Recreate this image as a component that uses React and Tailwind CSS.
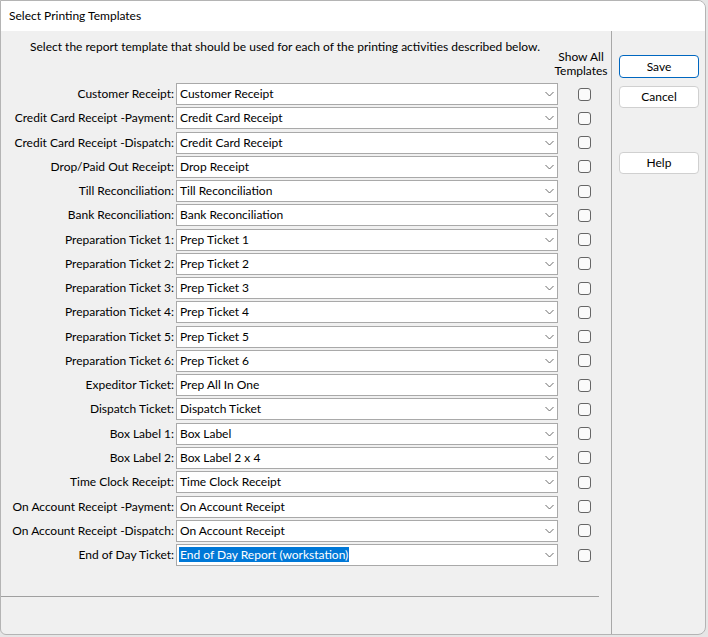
import React from "react";

const rows = [
  ["Customer Receipt:", "Customer Receipt"],
  ["Credit Card Receipt -Payment:", "Credit Card Receipt"],
  ["Credit Card Receipt -Dispatch:", "Credit Card Receipt"],
  ["Drop/Paid Out Receipt:", "Drop Receipt"],
  ["Till Reconciliation:", "Till Reconciliation"],
  ["Bank Reconciliation:", "Bank Reconciliation"],
  ["Preparation Ticket 1:", "Prep Ticket 1"],
  ["Preparation Ticket 2:", "Prep Ticket 2"],
  ["Preparation Ticket 3:", "Prep Ticket 3"],
  ["Preparation Ticket 4:", "Prep Ticket 4"],
  ["Preparation Ticket 5:", "Prep Ticket 5"],
  ["Preparation Ticket 6:", "Prep Ticket 6"],
  ["Expeditor Ticket:", "Prep All In One"],
  ["Dispatch Ticket:", "Dispatch Ticket"],
  ["Box Label 1:", "Box Label"],
  ["Box Label 2:", "Box Label 2 x 4"],
  ["Time Clock Receipt:", "Time Clock Receipt"],
  ["On Account Receipt -Payment:", "On Account Receipt"],
  ["On Account Receipt -Dispatch:", "On Account Receipt"],
  ["End of Day Ticket:", "End of Day Report (workstation)", true],
];

function Chevron() {
  return (
    <svg width="9" height="6" viewBox="0 0 9 6" className="shrink-0">
      <path d="M0.5 1 L4.5 5 L8.5 1" fill="none" stroke="#6b6b6b" strokeWidth="1" />
    </svg>
  );
}

function Row({ label, value, selected }) {
  return (
    <div className="flex h-[24.27px] items-start">
      <div className="w-[175px] shrink-0 whitespace-nowrap pr-[2px] text-right leading-[22px]">{label}</div>
      <div className="flex h-[22px] w-[382px] shrink-0 items-center border border-[#a9a9a9] bg-white pl-[2px] pr-[3px]">
        <div className="flex-1 leading-[18px]">
          {selected ? (
            <span className="bg-[#0078d7] px-[1px] text-white">{value}</span>
          ) : (
            <span className="px-[1px]">{value}</span>
          )}
        </div>
        <Chevron />
      </div>
      <div className="flex h-[22px] flex-1 items-center justify-center">
        <div className="h-[13px] w-[13px] rounded-[3px] border border-[#666] bg-[#fafafa]" />
      </div>
    </div>
  );
}

export default function App() {
  return (
    <div className="h-[637px] w-[708px] bg-[#e6e6e6] text-[12px] text-black" style={{ fontFamily: "Lato, 'Noto Sans', sans-serif" }}>
      <div className="flex h-[635px] w-[706px] flex-col overflow-hidden rounded-r-[8px] rounded-bl-[6px] border border-[#b4b4b4] bg-[#f0f0f0]">
        <div className="flex h-[30px] shrink-0 items-center bg-white pl-[8px]">Select Printing Templates</div>
        <div className="flex flex-1">
          <div className="flex w-[610px] shrink-0 flex-col">
            <div className="flex h-[52px] items-start">
              <div className="w-[550px] whitespace-nowrap pl-[29px] pt-[9px] leading-[14px]">
                Select the report template that should be used for each of the printing activities described below.
              </div>
              <div className="flex-1 pt-[19px] text-center leading-[14px]">
                Show All
                <br />
                Templates
              </div>
            </div>
            <div className="flex flex-col">
              {rows.map(([l, v, s], i) => (
                <Row key={i} label={l} value={v} selected={s} />
              ))}
            </div>
            <div className="mt-[28px] h-px w-[598px] bg-[#a0a0a0]" />
          </div>
          <div className="w-px bg-[#a8a8a8]" />
          <div className="flex flex-1 flex-col pl-[7px] pt-[24px]">
            <button className="h-[23px] w-[80px] rounded-[4px] border border-[#0067c0] bg-white leading-[20px]">Save</button>
            <button className="mt-[8px] h-[22px] w-[80px] rounded-[4px] border border-[#d0d0d0] bg-white leading-[20px]">Cancel</button>
            <button className="mt-[44px] h-[22px] w-[80px] rounded-[4px] border border-[#d0d0d0] bg-white leading-[20px]">Help</button>
          </div>
        </div>
      </div>
    </div>
  );
}
